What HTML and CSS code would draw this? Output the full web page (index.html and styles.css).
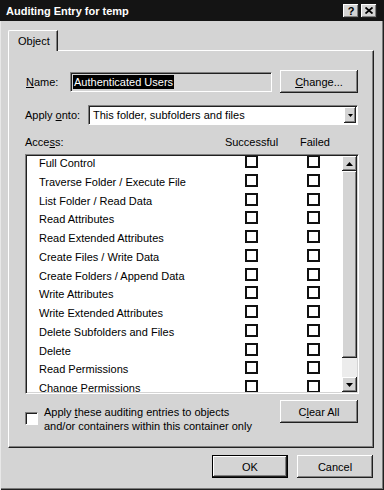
FILE: index.html
```html
<!DOCTYPE html>
<html lang="en">
<head>
  <meta charset="UTF-8">
  <title>Auditing Entry for temp</title>
  <link rel="stylesheet" href="styles.css">
</head>
<body>
  <div class="window">
    <div class="titlebar">
      <span class="title">Auditing Entry for temp</span>
      <span class="cap-btns">
        <span class="cap-btn">?</span>
        <span class="cap-btn">
          <svg width="8" height="7" viewBox="0 0 8 7"><path d="M0.5 0.5 L7.5 6.5 M7.5 0.5 L0.5 6.5" stroke="#000" stroke-width="1.8"/></svg>
        </span>
      </span>
    </div>

    <div class="tabs">
      <div class="tab">Object</div>
    </div>

    <div class="panel">
      <div class="name-row">
        <span class="lbl name-lbl"><u>N</u>ame:</span>
        <div class="textbox"><span class="sel">Authenticated Users</span></div>
        <button class="btn side-btn"><u>C</u>hange...</button>
      </div>

      <div class="apply-row">
        <span class="lbl apply-lbl">Apply <u>o</u>nto:</span>
        <div class="combo">
          <span class="combo-text">This folder, subfolders and files</span>
          <span class="combo-arrow">
            <svg width="5" height="3" viewBox="0 0 5 3"><path d="M0 0 H5 L2.5 3 Z" fill="#000"/></svg>
          </span>
        </div>
      </div>

      <div class="access-head">
        <span>Acce<u>s</u>s:</span>
        <span class="col-h">Successful</span>
        <span class="col-h">Failed</span>
      </div>

      <div class="listbox">
        <div class="list-rows">
          <div class="list-inner">
            <div class="list-row"><span>Full Control</span><i class="cb"></i><i></i><i class="cb"></i></div>
            <div class="list-row"><span>Traverse Folder / Execute File</span><i class="cb"></i><i></i><i class="cb"></i></div>
            <div class="list-row"><span>List Folder / Read Data</span><i class="cb"></i><i></i><i class="cb"></i></div>
            <div class="list-row"><span>Read Attributes</span><i class="cb"></i><i></i><i class="cb"></i></div>
            <div class="list-row"><span>Read Extended Attributes</span><i class="cb"></i><i></i><i class="cb"></i></div>
            <div class="list-row"><span>Create Files / Write Data</span><i class="cb"></i><i></i><i class="cb"></i></div>
            <div class="list-row"><span>Create Folders / Append Data</span><i class="cb"></i><i></i><i class="cb"></i></div>
            <div class="list-row"><span>Write Attributes</span><i class="cb"></i><i></i><i class="cb"></i></div>
            <div class="list-row"><span>Write Extended Attributes</span><i class="cb"></i><i></i><i class="cb"></i></div>
            <div class="list-row"><span>Delete Subfolders and Files</span><i class="cb"></i><i></i><i class="cb"></i></div>
            <div class="list-row"><span>Delete</span><i class="cb"></i><i></i><i class="cb"></i></div>
            <div class="list-row"><span>Read Permissions</span><i class="cb"></i><i></i><i class="cb"></i></div>
            <div class="list-row"><span>Change Permissions</span><i class="cb"></i><i></i><i class="cb"></i></div>
          </div>
        </div>
        <div class="scrollbar">
          <div class="sb-btn">
            <svg width="7" height="4" viewBox="0 0 7 4"><path d="M0 4 H7 L3.5 0 Z" fill="#000"/></svg>
          </div>
          <div class="sb-thumb"></div>
          <div class="sb-track"></div>
          <div class="sb-btn">
            <svg width="7" height="4" viewBox="0 0 7 4"><path d="M0 0 H7 L3.5 4 Z" fill="#000"/></svg>
          </div>
        </div>
      </div>

      <div class="bottom-row">
        <i class="chk"></i>
        <span class="chk-label">Apply <u>t</u>hese auditing entries to objects<br>and/or containers within this container only</span>
        <button class="btn side-btn">C<u>l</u>ear All</button>
      </div>
    </div>

    <div class="footer">
      <button class="btn foot-btn default">OK</button>
      <button class="btn foot-btn">Cancel</button>
    </div>
  </div>
</body>
</html>
```

FILE: styles.css
```css
body {
  margin: 0;
  background: #fff;
  font-family: "Liberation Sans", Arial, sans-serif;
  font-size: 11px;
  color: #000;
}

u {
  text-decoration-thickness: 1px;
  text-underline-offset: 1px;
}

.window {
  box-sizing: border-box;
  width: 384px;
  height: 490px;
  padding: 0 3px 3px;
  background: #d4d4d4;
  box-shadow: inset 1px 0 #e8e8e8, inset -1px -1px #202020, inset -2px -2px #7a7a7a;
}

/* title bar */
.titlebar {
  display: flex;
  align-items: center;
  height: 21px;
  margin: 0 -3px;
  padding: 0 7px 0 6px;
  background: #141414;
  color: #fff;
  font-size: 11px;
  font-weight: bold;
}

.title {
  flex: 1;
}

.cap-btns {
  display: flex;
  gap: 2px;
}

.cap-btn {
  display: flex;
  align-items: center;
  justify-content: center;
  width: 16px;
  height: 14px;
  background: #d4d4d4;
  color: #000;
  font-size: 11px;
  font-weight: bold;
  box-shadow: inset -1px -1px #202020, inset 1px 1px #fff, inset -2px -2px #808080;
}

/* tab */
.tabs {
  margin-top: 9px;
  padding-left: 5px;
  height: 20px;
}

.tab {
  position: relative;
  z-index: 1;
  box-sizing: border-box;
  width: 50px;
  height: 21px;
  padding: 4px 0 0 9px;
  background: #d4d4d4;
  border-top: 1px solid #fff;
  border-left: 1px solid #fff;
  border-right: 1px solid #202020;
  border-top-left-radius: 2px;
  box-shadow: inset -1px 0 #808080;
}

.panel {
  box-sizing: border-box;
  height: 398px;
  margin: 0 7px 0 5px;
  padding: 19px 15px 0 16px;
  border: 1px solid;
  border-color: #fff #202020 #202020 #fff;
  box-shadow: inset -1px -1px #808080;
}

/* buttons */
.btn {
  box-sizing: border-box;
  height: 23px;
  padding: 0;
  border: none;
  background: #d4d4d4;
  color: #000;
  font-family: inherit;
  font-size: 11px;
  box-shadow: inset -1px -1px #202020, inset 1px 1px #fff, inset -2px -2px #808080;
}

.side-btn {
  width: 78px;
  margin-left: auto;
}

.foot-btn {
  width: 76px;
}

.default {
  box-shadow: inset 0 0 0 1px #000, inset -2px -2px #202020, inset 2px 2px #fff, inset -3px -3px #808080;
}

/* name */
.name-row {
  display: flex;
  align-items: center;
  height: 23px;
}

.name-lbl {
  width: 44px;
  padding-left: 1px;
}

.textbox {
  box-sizing: border-box;
  display: flex;
  align-items: center;
  width: 202px;
  height: 20px;
  padding: 0 0 0 2px;
  border: 1px solid;
  border-color: #808080 #fff #fff #808080;
  box-shadow: inset 1px 1px #202020;
}

.sel {
  background: #000;
  color: #fff;
  line-height: 14px;
  padding: 0 1px;
}

/* apply onto */
.apply-row {
  display: flex;
  align-items: center;
  height: 20px;
  margin-top: 12px;
}

.apply-lbl {
  width: 63px;
}

.combo {
  box-sizing: border-box;
  display: flex;
  align-items: center;
  width: 270px;
  height: 20px;
  padding: 1px;
  background: #fff;
  border: 1px solid;
  border-color: #808080 #fff #fff #808080;
  box-shadow: inset 1px 1px #202020;
}

.combo-text {
  flex: 1;
  padding-left: 3px;
}

.combo-arrow {
  display: flex;
  align-items: center;
  justify-content: center;
  width: 12px;
  height: 16px;
  background: #d4d4d4;
  box-shadow: inset -1px -1px #202020, inset 1px 1px #fff, inset -2px -2px #808080;
}

/* access list */
.access-head {
  display: grid;
  grid-template-columns: 190px 73px 54px;
  margin-top: 11px;
  line-height: 13px;
}

.col-h {
  text-align: center;
}

.listbox {
  box-sizing: border-box;
  display: flex;
  width: 334px;
  height: 240px;
  margin-top: 5px;
  padding: 1px;
  background: #fff;
  border: 1px solid;
  border-color: #808080 #fff #fff #808080;
  box-shadow: inset 1px 1px #202020, inset -1px -1px #d4d4d4;
}

.list-rows {
  flex: 1;
  overflow: hidden;
}

.list-inner {
  margin-top: -2px;
}

.list-row {
  display: grid;
  grid-template-columns: 206px 13px 49px 13px;
  height: 18.75px;
  padding-left: 12px;
  line-height: 18.75px;
}

.list-row i {
  display: block;
}

.cb {
  box-sizing: border-box;
  width: 13px;
  height: 13px;
  margin-top: 1px;
  border: 2px solid #111;
}

.scrollbar {
  display: flex;
  flex-direction: column;
  width: 15px;
}

.sb-btn {
  display: flex;
  align-items: center;
  justify-content: center;
  height: 15px;
  background: #d4d4d4;
  box-shadow: inset -1px -1px #202020, inset 1px 1px #fff, inset -2px -2px #808080;
}

.sb-thumb {
  height: 187px;
  background: #d4d4d4;
  box-shadow: inset -1px -1px #202020, inset 1px 1px #fff, inset -2px -2px #808080;
}

.sb-track {
  flex: 1;
  background: #ececec;
}

/* bottom row */
.bottom-row {
  display: flex;
  align-items: flex-start;
  margin-top: 6px;
}

.chk {
  display: block;
  flex-shrink: 0;
  box-sizing: border-box;
  width: 13px;
  height: 13px;
  margin-top: 12px;
  background: #fff;
  border: 1px solid;
  border-color: #808080 #fff #fff #808080;
  box-shadow: inset 1px 1px #202020;
}

.chk-label {
  margin: 5px 0 0 6px;
  line-height: 14px;
}

.footer {
  display: flex;
  justify-content: flex-end;
  gap: 9px;
  margin-top: 7px;
  padding-right: 8px;
}
```
